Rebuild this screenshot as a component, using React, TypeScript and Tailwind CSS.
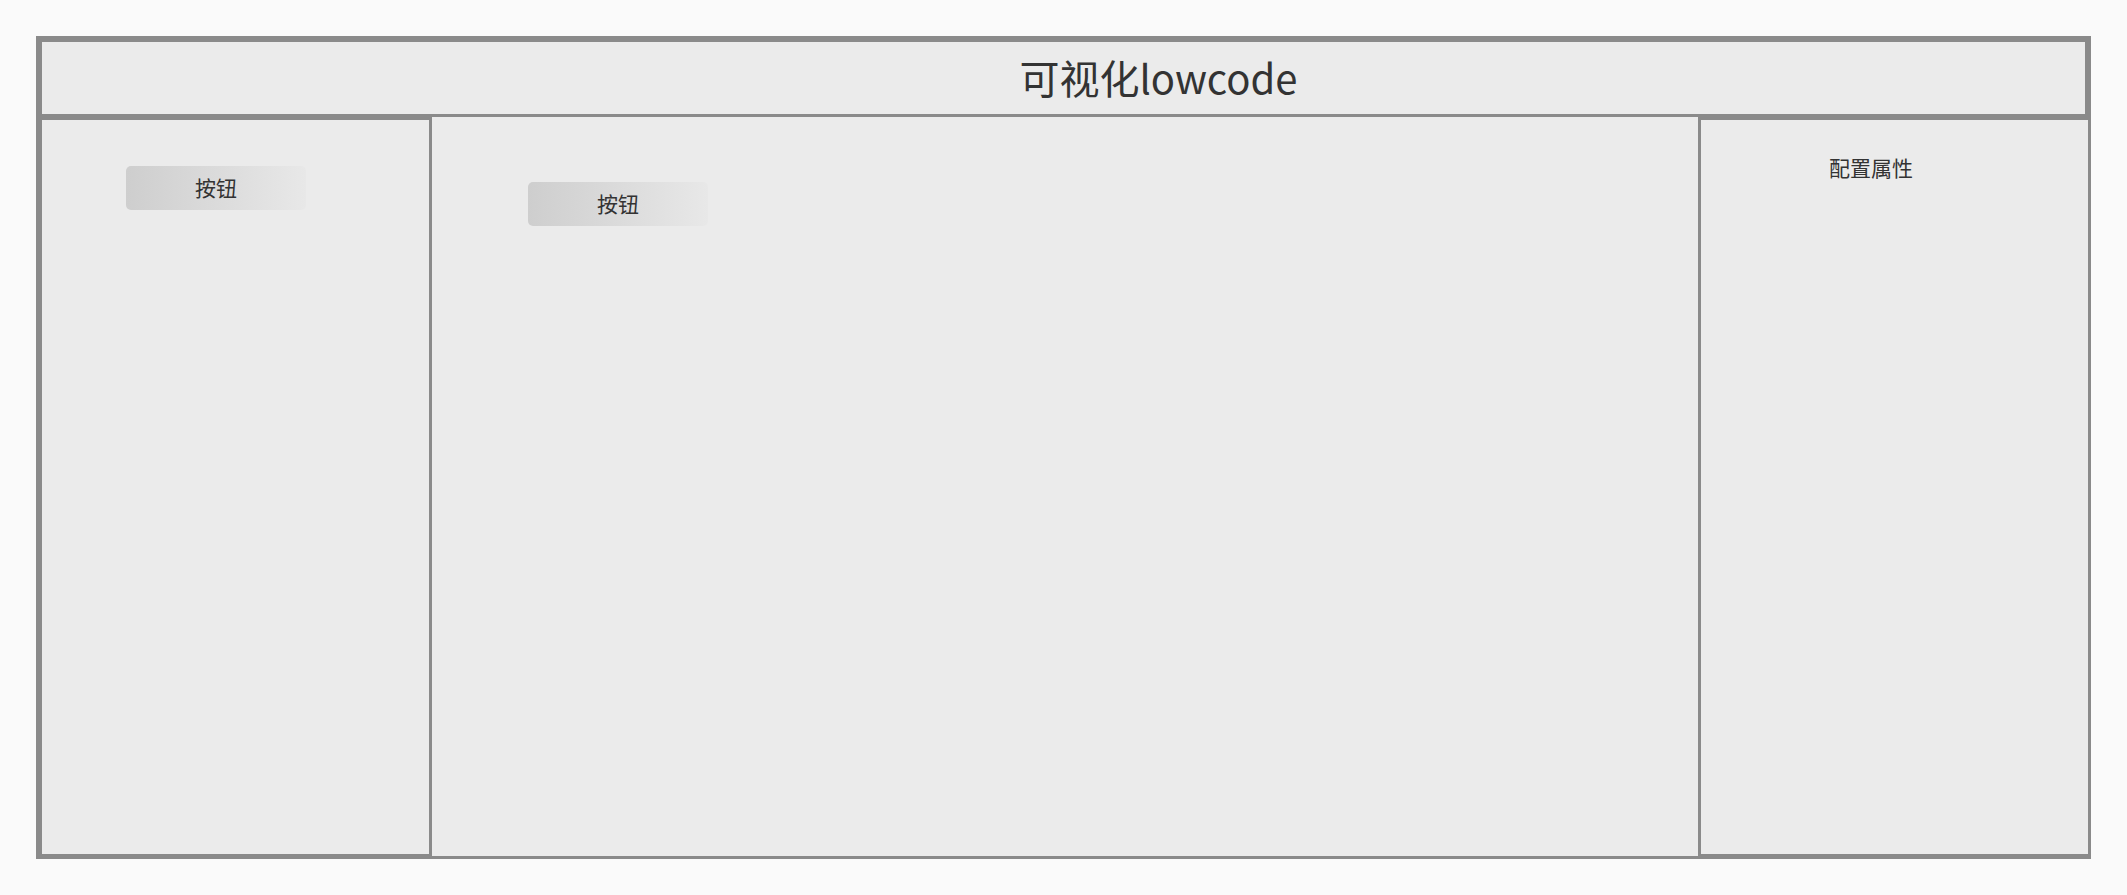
const font = { fontFamily: '"Noto Sans CJK SC", "Noto Sans", sans-serif' };

function DragButton({ className = "" }: { className?: string }) {
  return (
    <div
      className={`flex h-[44px] w-[180px] items-center justify-center rounded-[5px] bg-linear-to-r from-[#cecece] to-[#e8e8e8] text-[21px] text-[#333] ${className}`}
    >
      按钮
    </div>
  );
}

export default function App() {
  return (
    <div
      className="min-h-[895px] w-full bg-[#fafafa] px-[36px] pt-[36px]"
      style={font}
    >
      <div className="flex h-[823px] flex-col border-[3px] border-[#8a8a8a] bg-[#ebebeb]">
        <header className="flex h-[78px] shrink-0 items-center justify-center border-[3px] border-[#8a8a8a] pb-[2px] pl-[190px]">
          <h1 className="text-[40px] leading-none text-[#333]">可视化lowcode</h1>
        </header>

        <div className="flex min-h-0 flex-1">
          <aside className="w-[393px] shrink-0 border-x-[3px] border-t-[3px] border-b-2 border-[#8a8a8a] pl-[84px] pt-[46px]">
            <DragButton />
          </aside>

          <main className="flex-1 pl-[96px] pt-[65px]">
            <DragButton />
          </main>

          <aside className="w-[390px] shrink-0 border-l-[3px] border-t-[3px] border-b-2 border-[#8a8a8a] pl-[128px] pt-[32px]">
            <p className="text-[21px] text-[#333]">配置属性</p>
          </aside>
        </div>
      </div>
    </div>
  );
}
